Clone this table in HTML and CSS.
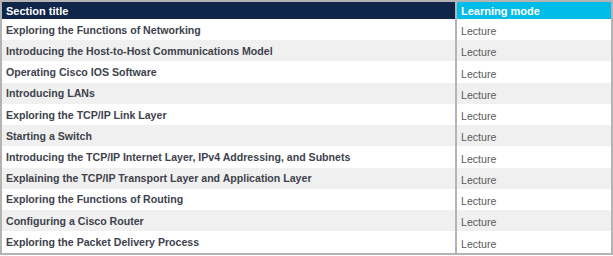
FILE: index.html
```html
<!DOCTYPE html>
<html lang="en">
<head>
  <meta charset="UTF-8" />
  <title>Course outline</title>
  <link rel="stylesheet" href="styles.css">
</head>
<body>
  <table class="outline">
    <thead>
      <tr>
        <th class="col-title">Section title</th>
        <th class="col-mode">Learning mode</th>
      </tr>
    </thead>
    <tbody>
      <tr><td class="title">Exploring the Functions of Networking</td><td class="mode">Lecture</td></tr>
      <tr><td class="title">Introducing the Host-to-Host Communications Model</td><td class="mode">Lecture</td></tr>
      <tr><td class="title">Operating Cisco IOS Software</td><td class="mode">Lecture</td></tr>
      <tr><td class="title">Introducing LANs</td><td class="mode">Lecture</td></tr>
      <tr><td class="title">Exploring the TCP/IP Link Layer</td><td class="mode">Lecture</td></tr>
      <tr><td class="title">Starting a Switch</td><td class="mode">Lecture</td></tr>
      <tr><td class="title">Introducing the TCP/IP Internet Layer, IPv4 Addressing, and Subnets</td><td class="mode">Lecture</td></tr>
      <tr><td class="title">Explaining the TCP/IP Transport Layer and Application Layer</td><td class="mode">Lecture</td></tr>
      <tr><td class="title">Exploring the Functions of Routing</td><td class="mode">Lecture</td></tr>
      <tr><td class="title">Configuring a Cisco Router</td><td class="mode">Lecture</td></tr>
      <tr><td class="title">Exploring the Packet Delivery Process</td><td class="mode">Lecture</td></tr>
    </tbody>
  </table>
</body>
</html>
```

FILE: styles.css
```css
body {
  margin: 0;
  background-color: #fff;
  font-family: 'Liberation Sans', Arial, sans-serif;
}

.outline {
  width: 613px;
  height: 255px;
  border-collapse: collapse;
  border: 2px solid #b4b4b4;
  box-sizing: border-box;
  font-size: 10.6px;
}

.outline th {
  height: 17px;
  padding: 0 4px;
  text-align: left;
  color: #fff;
  font-weight: 700;
  font-size: 11px;
}

.col-title {
  background-color: #0f264a;
}

.col-mode {
  width: 146px;
  background-color: #00bce8;
  border-left: 2px solid #b4b4b4;
}

.outline td {
  padding: 0 4px;
}

.outline tbody tr:nth-child(even) td {
  background-color: #f0f0f0;
}

.title {
  font-weight: 700;
  color: #3d424c;
}

.mode {
  color: #5a5a5a;
  border-left: 2px solid #b4b4b4;
  padding-top: 3px !important;
}
```
